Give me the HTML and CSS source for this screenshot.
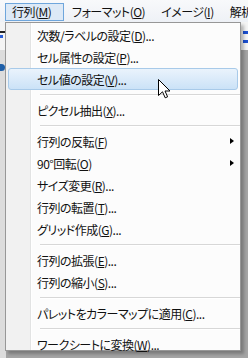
FILE: index.html
```html
<!DOCTYPE html>
<html>
<head>
<meta charset="utf-8">
<link rel="stylesheet" href="styles.css">
</head>
<body>
<div class="menubar">
  <div class="mb-item active">行列(<u>M</u>)</div>
  <div class="mb-item">フォーマット(<u>O</u>)</div>
  <div class="mb-item">イメージ(<u>I</u>)</div>
  <div class="mb-item">解析(<u>A</u>)</div>
</div>
<div class="workspace">
  <div class="toolbar-bg">
    <div class="tb-left"><span class="tb-line"></span><span class="tb-blue"></span></div>
    <div class="tb-right"><span class="tb-bar"></span><span class="tb-bar"></span></div>
  </div>
  <div class="client-bg"><span class="dot"></span></div>

  <div class="menu">
    <div class="gutter-line"></div>
    <div class="item">次数/ラベルの設定(<u>D</u>)...</div>
    <div class="item">セル属性の設定(<u>P</u>)...</div>
    <div class="item hot">セル値の設定(<u>V</u>)...</div>
    <div class="sep"></div>
    <div class="item">ピクセル抽出(<u>X</u>)...</div>
    <div class="sep"></div>
    <div class="item sub">行列の反転(<u>F</u>)<span class="arrow"></span></div>
    <div class="item sub">90°回転(<u>O</u>)<span class="arrow"></span></div>
    <div class="item">サイズ変更(<u>R</u>)...</div>
    <div class="item">行列の転置(<u>T</u>)...</div>
    <div class="item">グリッド作成(<u>G</u>)...</div>
    <div class="sep"></div>
    <div class="item">行列の拡張(<u>E</u>)...</div>
    <div class="item">行列の縮小(<u>S</u>)...</div>
    <div class="sep"></div>
    <div class="item">パレットをカラーマップに適用(<u>C</u>)...</div>
    <div class="sep"></div>
    <div class="item">ワークシートに変換(<u>W</u>)...</div>
  </div>

  <svg class="cursor" width="13" height="20" viewBox="0 0 13 20">
    <path d="M0.5 0.5 L0.5 16.5 L4.5 12.8 L7.2 18.8 L9.6 17.8 L7 12 L12 12 Z" fill="#fff" stroke="#000" stroke-width="1" stroke-linejoin="miter"/>
  </svg>
</div>
</body>
</html>
```
FILE: styles.css
```css
* { box-sizing: border-box; }
html, body {
  margin: 0;
  padding: 0;
  width: 248px;
  height: 358px;
  overflow: hidden;
}
body {
  font-family: "Noto Sans CJK JP", "Noto Sans", sans-serif;
  font-size: 12px;
  font-feature-settings: "palt";
  letter-spacing: -0.5px;
  color: #111;
  background: #ababab;
}
u { text-decoration: underline; text-underline-offset: 1px; }

.menubar {
  height: 22px;
  display: flex;
  align-items: flex-start;
  padding: 3px 0 0 5px;
  background: linear-gradient(#f8f9fb, #eef1f6);
  white-space: nowrap;
  overflow: hidden;
}
.mb-item {
  flex: none;
  height: 18px;
  line-height: 16px;
  padding: 0 7px;
  border: 1px solid transparent;
}
.mb-item.active {
  border-color: #6fa6dc;
  background: #dde9f6;
  width: 59px;
  padding: 0 6px;
}

.workspace {
  position: relative;
  height: 336px;
}
.toolbar-bg {
  height: 28px;
  display: flex;
  justify-content: space-between;
  background: #f4f4f4;
}
.tb-left {
  width: 6px;
  display: flex;
  flex-direction: column;
  padding-top: 9px;
  gap: 2px;
}
.tb-line { display: block; height: 2px; background: #222; }
.tb-blue { display: block; height: 3px; background: #2a5fd8; width: 3px; }
.tb-right {
  width: 7px;
  display: flex;
  flex-direction: column;
  padding-top: 9px;
  gap: 6px;
  align-items: flex-end;
}
.tb-bar { display: block; width: 5px; height: 3px; background: #1b4fd0; }
.client-bg {
  height: 308px;
  background: linear-gradient(to right, #dcdcdc 0 6px, #a4a4a4 6px);
  padding-top: 14px;
}
.dot {
  display: block;
  width: 5px;
  height: 7px;
  border-radius: 0 4px 4px 0;
  background: #1f5fa8;
}

.menu {
  position: absolute;
  left: 5px;
  top: 0;
  width: 236px;
  height: 329px;
  border: 1px solid #979797;
  background: #fcfcfc;
  padding: 1px 2px;
  box-shadow: 3px 3px 3px rgba(0,0,0,0.25);
}
.menu::before {
  content: "";
  position: absolute;
  left: 0;
  top: 0;
  bottom: 0;
  width: 24px;
  background: #f1f1f1;
}
.gutter-line {
  position: absolute;
  left: 24px;
  top: 0;
  bottom: 0;
  width: 2px;
  border-left: 1px solid #e2e3e3;
  border-right: 1px solid #fff;
}
.item {
  position: relative;
  height: 22px;
  line-height: 22px;
  padding-left: 28px;
  white-space: nowrap;
  border: 1px solid transparent;
  border-radius: 3px;
}
.item.hot {
  border-color: #a8cae9;
  background: linear-gradient(#eaf3fc, #cbe2f7);
}
.sep {
  position: relative;
  height: 9px;
  margin-left: 32px;
  margin-right: -2px;
}
.sep::after {
  content: "";
  position: absolute;
  left: 0;
  right: 0;
  top: 4px;
  height: 1px;
  background: #d7d7d7;
  border-bottom: 1px solid #fff;
}
.arrow {
  position: absolute;
  right: 3px;
  top: 7px;
  width: 0;
  height: 0;
  border-top: 3.5px solid transparent;
  border-bottom: 3.5px solid transparent;
  border-left: 4px solid #000;
}
.cursor {
  position: absolute;
  left: 158px;
  top: 57px;
}
```
